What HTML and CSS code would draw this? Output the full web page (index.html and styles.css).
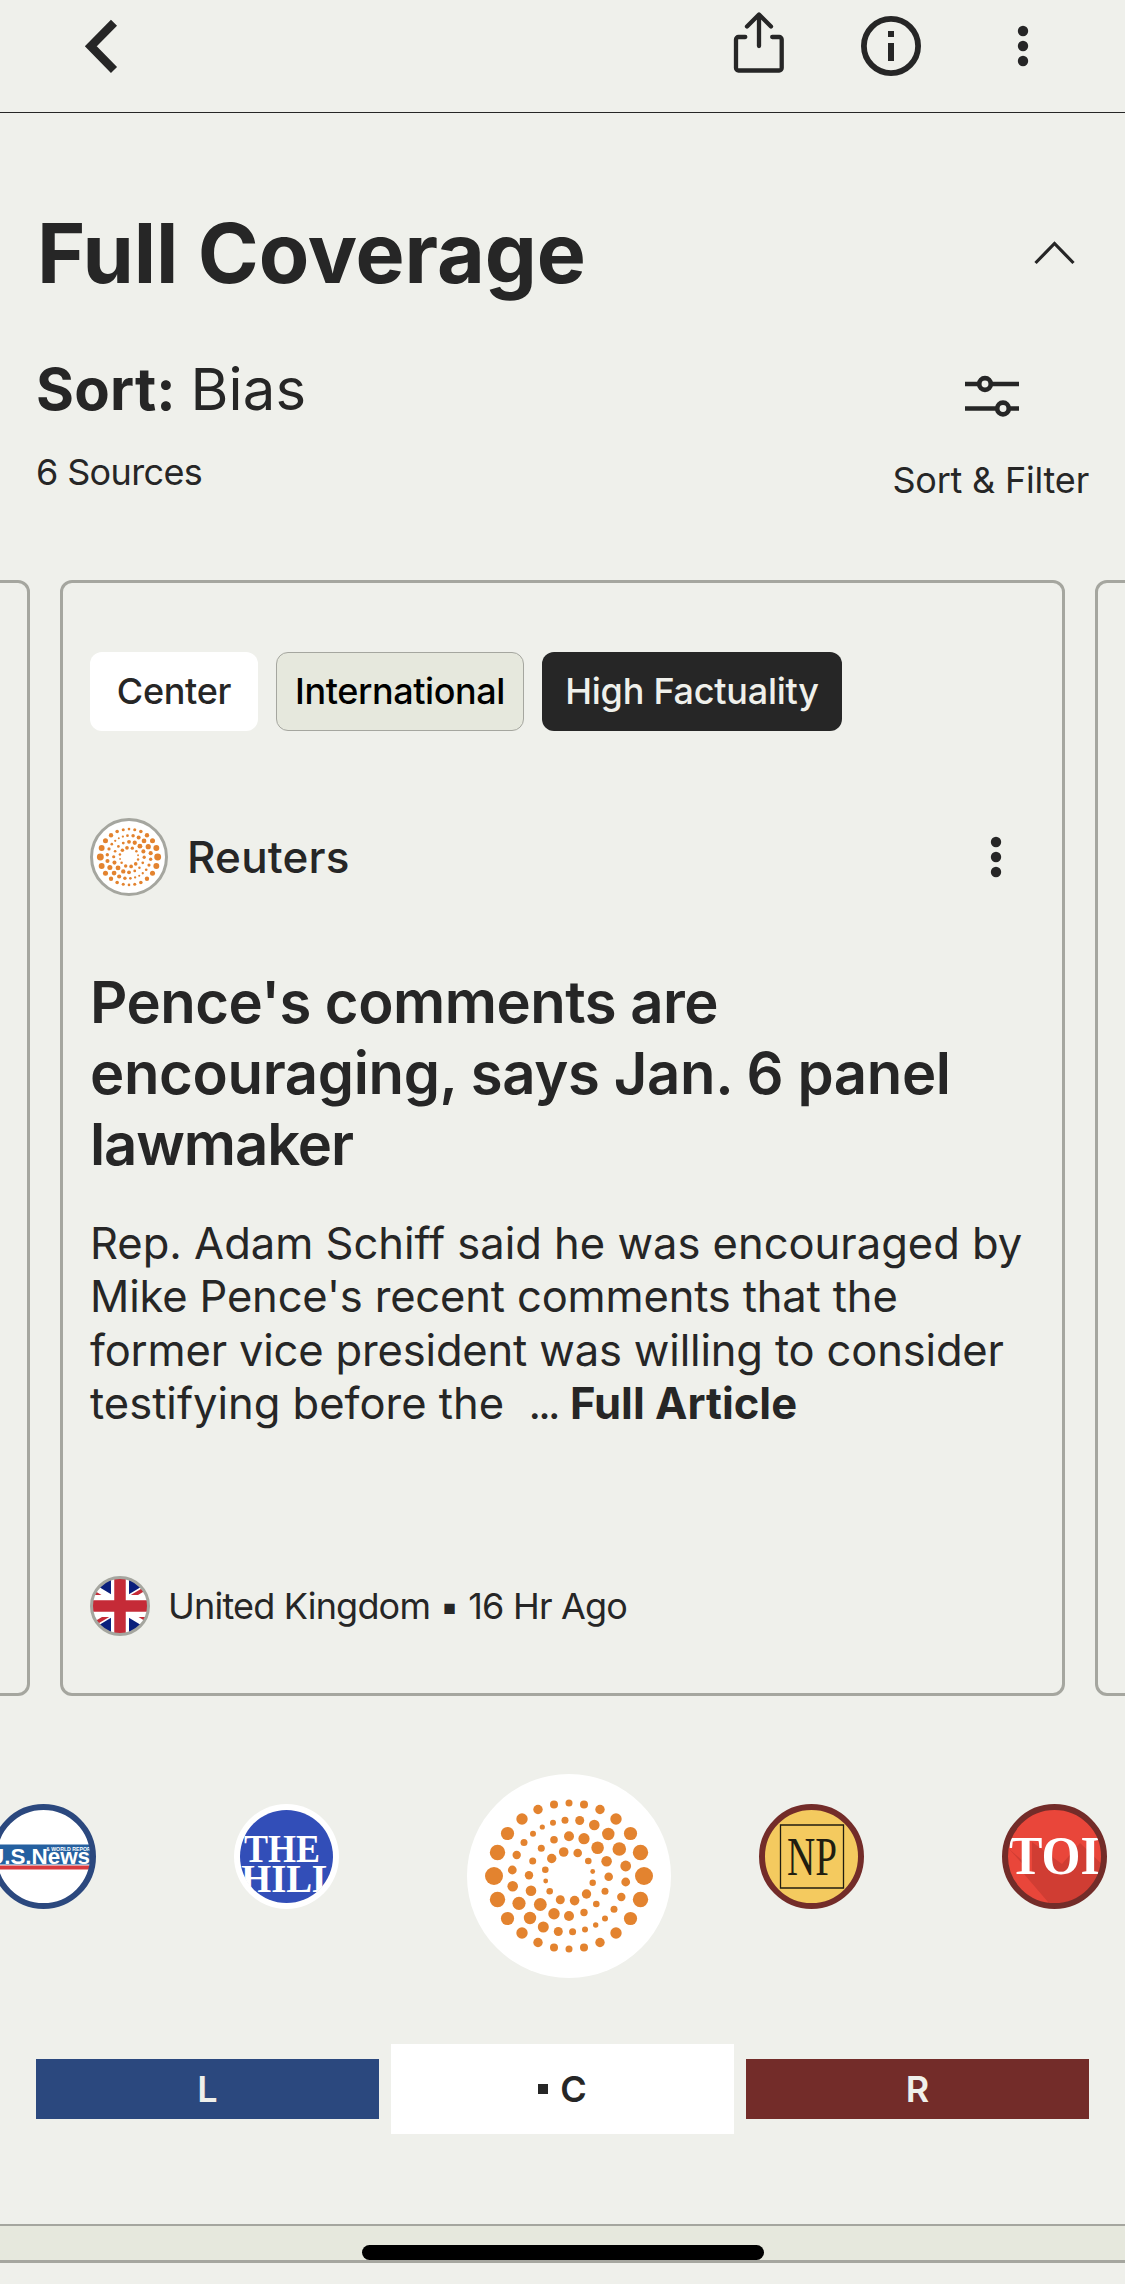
FILE: index.html
```html
<!DOCTYPE html>
<html lang="en">
<head>
<meta charset="utf-8">
<title>Full Coverage</title>
<link rel="stylesheet" href="styles.css">
</head>
<body>
<svg class="defs" aria-hidden="true">
  <defs>
    <symbol id="reuters" viewBox="0 0 204 204">
      <g fill="#e3832f">
        <circle cx="102" cy="29" r="3.5"/><circle cx="117" cy="30.500" r="4"/><circle cx="133" cy="35.500" r="4.700"/><circle cx="149" cy="45" r="5.700"/><circle cx="163.500" cy="59.500" r="6.600"/><circle cx="173.500" cy="78.500" r="7.700"/><circle cx="177" cy="102" r="9"/><circle cx="173.500" cy="125.500" r="7.700"/><circle cx="163.500" cy="144.500" r="6.600"/><circle cx="149" cy="159" r="5.700"/><circle cx="133" cy="168.500" r="4.700"/><circle cx="117" cy="173.500" r="4"/><circle cx="102" cy="175" r="3.500"/><circle cx="87" cy="173.500" r="4"/><circle cx="71" cy="168.500" r="4.700"/><circle cx="55" cy="159" r="5.700"/><circle cx="40.500" cy="144.500" r="6.600"/><circle cx="30.500" cy="125.500" r="7.700"/><circle cx="27" cy="102" r="9"/><circle cx="30.500" cy="78.500" r="7.700"/><circle cx="40.500" cy="59.500" r="6.600"/><circle cx="55" cy="45" r="5.700"/><circle cx="71" cy="35.500" r="4.700"/><circle cx="87" cy="30.500" r="4"/>
        <circle cx="98" cy="46.300" r="3.500"/><circle cx="112.700" cy="46.500" r="4.500"/><circle cx="127.300" cy="51" r="5.300"/><circle cx="141.300" cy="60" r="6.200"/><circle cx="152.300" cy="75" r="6.800"/><circle cx="158.700" cy="92" r="5.400"/><circle cx="158.700" cy="108" r="4.400"/><circle cx="154.300" cy="123" r="4.200"/><circle cx="147" cy="135.300" r="3.500"/><circle cx="138" cy="144.500" r="3"/><circle cx="128.700" cy="151" r="2.700"/><circle cx="118" cy="155.500" r="3"/><circle cx="105.600" cy="157.800" r="3.500"/><circle cx="91.300" cy="157.500" r="4.500"/><circle cx="76.300" cy="153" r="5.500"/><circle cx="63" cy="144" r="6.200"/><circle cx="52" cy="129.300" r="6.600"/><circle cx="45.700" cy="112.300" r="5.300"/><circle cx="45.300" cy="96" r="4.400"/><circle cx="49.700" cy="81" r="4.200"/><circle cx="57" cy="68.500" r="3.500"/><circle cx="66" cy="59.700" r="3"/><circle cx="75.300" cy="53" r="2.600"/><circle cx="86" cy="48.700" r="3"/>
        <circle cx="102" cy="62.300" r="5"/><circle cx="117" cy="64.700" r="5.600"/><circle cx="130.600" cy="73.700" r="6.300"/><circle cx="139.600" cy="87.300" r="5.300"/><circle cx="141.700" cy="102.700" r="4.300"/><circle cx="138" cy="117.300" r="3.500"/><circle cx="129.300" cy="130" r="3.300"/><circle cx="117" cy="138.500" r="3.700"/><circle cx="102" cy="142" r="5"/><circle cx="87" cy="139.700" r="5.700"/><circle cx="73.300" cy="130.500" r="6.400"/><circle cx="64" cy="116.700" r="5.300"/><circle cx="62" cy="101.300" r="4.200"/><circle cx="65.700" cy="87" r="3.500"/><circle cx="74.300" cy="74.300" r="3.500"/><circle cx="87" cy="65.700" r="3.800"/>
        <circle cx="96.700" cy="78" r="4.800"/><circle cx="110.700" cy="79" r="4.300"/><circle cx="121.300" cy="87" r="3.300"/><circle cx="125.700" cy="97.500" r="2.400"/><circle cx="125.700" cy="108.700" r="3.200"/><circle cx="119.500" cy="120" r="4.700"/><circle cx="107.600" cy="126.600" r="4.800"/><circle cx="93.300" cy="125.700" r="4.500"/><circle cx="82.700" cy="117.300" r="3.300"/><circle cx="78.700" cy="107" r="2.400"/><circle cx="78.300" cy="95.700" r="3.300"/><circle cx="84.700" cy="84.500" r="4.700"/>
      </g>
    </symbol>
    <symbol id="more" viewBox="0 0 12 42">
      <g fill="#262626"><circle cx="6" cy="6" r="5.200"/><circle cx="6" cy="21" r="5.200"/><circle cx="6" cy="36" r="5.200"/></g>
    </symbol>
  </defs>
</svg>

<header class="topbar">
  <svg class="back" width="40" height="56" viewBox="0 0 40 56"><path d="M33 3.700 9.800 27.300 33 51" fill="none" stroke="#262626" stroke-width="8.500"/></svg>
  <nav class="actions">
    <svg width="54" height="64" viewBox="0 0 54 64" fill="none" stroke="#262626" stroke-width="4.300" stroke-linecap="round" stroke-linejoin="round"><path d="M13.300 25H6.500a2.500 2.500 0 0 0-2.500 2.500V56a2.500 2.500 0 0 0 2.500 2.500H47.200a2.500 2.500 0 0 0 2.500-2.500V27.500a2.500 2.500 0 0 0-2.500-2.500H40.200M27 34V3M15 14.500 27 2.500 39 14.500"/></svg>
    <svg width="60" height="60" viewBox="0 0 60 60"><circle cx="30" cy="30" r="27.100" fill="none" stroke="#262626" stroke-width="5.800"/><path d="M27 15h6v6h-6zM27 27h6v18h-6z" fill="#262626"/></svg>
    <svg class="top-more" width="12" height="42"><use href="#more"/></svg>
  </nav>
</header>

<main>
  <section class="heading">
    <h1>Full Coverage</h1>
    <svg width="42" height="26" viewBox="0 0 42 26"><path d="M2.500 23 21.500 3.500 40.500 23" fill="none" stroke="#262626" stroke-width="3.200"/></svg>
  </section>

  <section class="sortbar">
    <div class="sort">
      <p class="sort-by"><b>Sort:</b> Bias</p>
      <p class="count">6 Sources</p>
    </div>
    <div class="filter">
      <svg width="54" height="44" viewBox="0 0 54 44" fill="none" stroke="#262626" stroke-width="4.700"><path d="M0 10H14M26 10H54M0 34.500H32M44 34.500H54"/><circle cx="20" cy="10" r="5.800"/><circle cx="38" cy="34.500" r="5.800"/></svg>
      <span>Sort &amp; Filter</span>
    </div>
  </section>

  <section class="carousel">
    <div class="card"></div>
    <article class="card">
      <div class="tags"><span class="tag center">Center</span><span class="tag intl">International</span><span class="tag fact">High Factuality</span></div>
      <div class="source">
        <span class="avatar"><svg width="78" height="78"><use href="#reuters"/></svg></span>
        <span class="name">Reuters</span>
        <svg class="card-more" width="12" height="42"><use href="#more"/></svg>
      </div>
      <h2><span class="t1">Pence's comments are</span><br><span class="t2">encouraging, says Jan. 6 panel</span><br><span class="t3">lawmaker</span></h2>
      <p class="summary">Rep. Adam Schiff said he was encouraged by<br><span class="tight">Mike Pence's recent comments that the</span><br><span class="tight">former vice president was willing to consider</span><br>testifying before the &nbsp;<span class="dots">...</span> <b>Full Article</b></p>
      <div class="origin">
        <svg width="60" height="60" viewBox="0 0 60 60">
          <clipPath id="disc"><circle cx="30" cy="30" r="28"/></clipPath>
          <g clip-path="url(#disc)">
            <path fill="#0a1f7c" d="M0 0h60v60H0z"/>
            <path stroke="#fff" stroke-width="11" d="M-20 0 80 60M-20 60 80 0"/>
            <path stroke="#c52b37" stroke-width="3.800" d="M-20 2.300 30 32.300M30 27.700 80 57.700M-20 62.300 30 32.300M30 27.700 80-2.300"/>
            <path stroke="#fff" stroke-width="18" d="M30 0v60"/><path stroke="#fff" stroke-width="22" d="M0 30h60"/>
            <path stroke="#c52b37" stroke-width="11.500" d="M30 0v60M0 30h60"/>
          </g>
          <circle cx="30" cy="30" r="28.500" fill="none" stroke="#a5a69f" stroke-width="3"/>
        </svg>
        <span>United Kingdom ▪ 16 Hr Ago</span>
      </div>
    </article>
    <div class="card"></div>
  </section>

  <section class="sources">
    <svg class="logo" width="105" height="105" viewBox="0 0 105 105">
      <clipPath id="inner"><circle cx="52.500" cy="52.500" r="47"/></clipPath>
      <circle cx="52.500" cy="52.500" r="49.500" fill="#fff"/>
      <g clip-path="url(#inner)">
        <path fill="#2560a0" d="M0 40.500h105v20H0z"/><path fill="#d83a3e" d="M0 61.500h105v4H0z"/>
        <text class="usn" x="-3" y="60" textLength="102" lengthAdjust="spacingAndGlyphs">U.S.News</text>
        <text class="usn-small" x="55" y="47" textLength="48" lengthAdjust="spacingAndGlyphs">&amp; WORLD REPORT</text>
      </g>
      <circle cx="52.500" cy="52.500" r="49.500" fill="none" stroke="#2b487e" stroke-width="6"/>
    </svg>
    <svg class="logo" width="105" height="105" viewBox="0 0 105 105">
      <circle cx="52.500" cy="52.500" r="52.500" fill="#fff"/><circle cx="52.500" cy="52.500" r="46.500" fill="#324eb8"/>
      <g clip-path="url(#inner)" class="hill">
        <text x="10" y="58" textLength="76" lengthAdjust="spacingAndGlyphs">THE</text>
        <text x="7" y="88" textLength="97" lengthAdjust="spacingAndGlyphs">HILL</text>
      </g>
    </svg>
    <span class="current"><svg width="204" height="204"><use href="#reuters"/></svg></span>
    <svg class="logo" width="105" height="105" viewBox="0 0 105 105">
      <circle cx="52.500" cy="52.500" r="49.500" fill="#f4ca5f" stroke="#732c29" stroke-width="6"/>
      <path d="M21.500 21H84.500V84H21.500z" fill="none" stroke="#211d10" stroke-width="1.300"/>
      <text class="np" x="28" y="71" textLength="50" lengthAdjust="spacingAndGlyphs">NP</text>
    </svg>
    <svg class="logo" width="105" height="105" viewBox="0 0 105 105">
      <circle cx="52.500" cy="52.500" r="49.500" fill="#e9463a"/>
      <g clip-path="url(#inner)">
        <path fill="#d03d33" d="M6 44 22 58V70L46 98V105H105V65L78 39 60 60 30 38V70z"/>
        <text class="toi" x="7" y="70" textLength="91" lengthAdjust="spacingAndGlyphs">TOI</text>
      </g>
      <circle cx="52.500" cy="52.500" r="49.500" fill="none" stroke="#732c29" stroke-width="6"/>
    </svg>
  </section>

  <section class="bias">
    <div class="bar left">L</div><div class="bar mid"><i></i>C</div><div class="bar right">R</div>
  </section>
</main>

<footer class="band"><span class="home"></span></footer>
</body>
</html>
```

FILE: styles.css
```css
* { box-sizing: border-box; }
body {
  margin: 0;
  width: 1125px;
  height: 2284px;
  overflow: hidden;
  background: #eff0eb;
  color: #262626;
  font-family: Inter, "Liberation Sans", sans-serif;
  font-size: 36px;
}
h1, h2, p { margin: 0; }
svg { display: block; flex: none; }
span, p, h1, h2 { white-space: nowrap; }
.defs { position: absolute; width: 0; height: 0; }

.topbar {
  height: 113px;
  border-bottom: 1px solid #262626;
  display: flex;
  justify-content: space-between;
  align-items: flex-start;
  padding: 0 96px 0 81px;
}
.back { margin-top: 19px; }
.actions { display: flex; align-items: flex-start; padding-top: 12px; }
.actions svg:nth-child(2) { margin: 4px 0 0 75px; }
.actions .top-more { margin: 13px 0 0 96px; }

.heading {
  height: 219px;
  padding: 90px 50px 0 37px;
  display: flex;
  justify-content: space-between;
}
.heading h1 { font-size: 82.500px; line-height: 100px; font-weight: 650; letter-spacing: -0.1px; }
.heading svg { margin-top: 37px; }

.sortbar {
  height: 248px;
  padding: 22px 36px 0;
  display: flex;
  justify-content: space-between;
}
.sort-by { font-size: 58px; line-height: 70px; word-spacing: -2px; letter-spacing: 0.2px; }
.sort-by b { font-weight: 700; }
.count { line-height: 44px; margin-top: 26px; letter-spacing: -0.65px; }
.filter { display: flex; flex-direction: column; align-items: center; padding-top: 20px; }
.filter svg { margin-left: 2px; }
.filter span { line-height: 44px; margin-top: 40px; letter-spacing: -0.2px; }

.carousel { display: flex; justify-content: center; gap: 30px; height: 1116px; overflow: hidden; }
.card { width: 1005px; height: 1116px; flex: none; border: 3px solid #a5a69f; border-radius: 12px; padding: 69px 27px 0; }
.tags { display: flex; gap: 18px; }
.tag { height: 79px; line-height: 79px; border-radius: 12px; text-align: center; font-weight: 500; }
.center { width: 168px; background: #fff; letter-spacing: -0.3px; }
.intl { width: 248px; background: #e6e8dd; border: 1.500px solid #a5a69f; line-height: 77px; color: #000; letter-spacing: -0.4px; }
.fact { width: 300px; background: #262626; color: #eff0eb; letter-spacing: -0.25px; }
.source { display: flex; align-items: center; height: 78px; margin-top: 87px; }
.avatar { width: 78px; height: 78px; border: 3px solid #a5a69f; border-radius: 50%; background: #fff; display: flex; align-items: center; justify-content: center; }
.name { font-size: 44px; font-weight: 500; margin-left: 19px; letter-spacing: 0.2px; }
.card-more { margin-left: auto; margin-right: 33px; }
.card h2 { font-size: 58px; line-height: 71px; font-weight: 600; margin-top: 71px; }
.t1 { letter-spacing: -0.5px; }
.t2 { letter-spacing: -0.35px; }
.t3 { letter-spacing: -1.100px; }
.summary { font-size: 43.500px; line-height: 53.400px; margin-top: 37px; }
.tight { letter-spacing: -0.16px; }
.dots { letter-spacing: -2.800px; }
.origin { display: flex; align-items: center; height: 60px; margin-top: 145.400px; gap: 18px; letter-spacing: -0.8px; }

.sources { display: flex; align-items: flex-start; margin: 78px 0 0 -9px; height: 204px; width: 1134px; }
.logo { margin-top: 30px; }
.logo:nth-child(2) { margin-left: 138px; }
.current { margin-left: 128px; border-radius: 50%; background: #fff; width: 204px; height: 204px; }
.logo:nth-child(4) { margin-left: 88px; }
.logo:nth-child(5) { margin-left: 138px; }
.usn { font: 700 22px "Liberation Sans", sans-serif; fill: #fff; }
.usn-small { font: 700 5.500px "Liberation Sans", sans-serif; fill: #fff; }
.hill text { font: 700 40px "Liberation Serif", serif; fill: #fff; }
.np { font: 55px "Liberation Serif", serif; fill: #211d10; }
.toi { font: 700 54px "Liberation Serif", serif; fill: #fff; }

.bias { display: flex; align-items: center; gap: 12px; height: 90px; margin: 66px 36px 0; }
.bar { flex: 1; height: 60px; display: flex; align-items: center; justify-content: center; color: #eff0eb; font-weight: 600; }
.left { background: #2b487e; }
.mid { height: 90px; background: #fff; color: #262626; gap: 12px; }
.mid i { width: 10px; height: 10px; background: #262626; }
.right { background: #732c29; }

.band { margin-top: 90px; height: 39px; background: #e6e8dd; border-top: 2px solid #a5a69f; border-bottom: 3px solid #a5a69f; display: flex; justify-content: center; align-items: flex-end; }
.home { width: 402px; height: 15px; border-radius: 8px; background: #000; }
```
